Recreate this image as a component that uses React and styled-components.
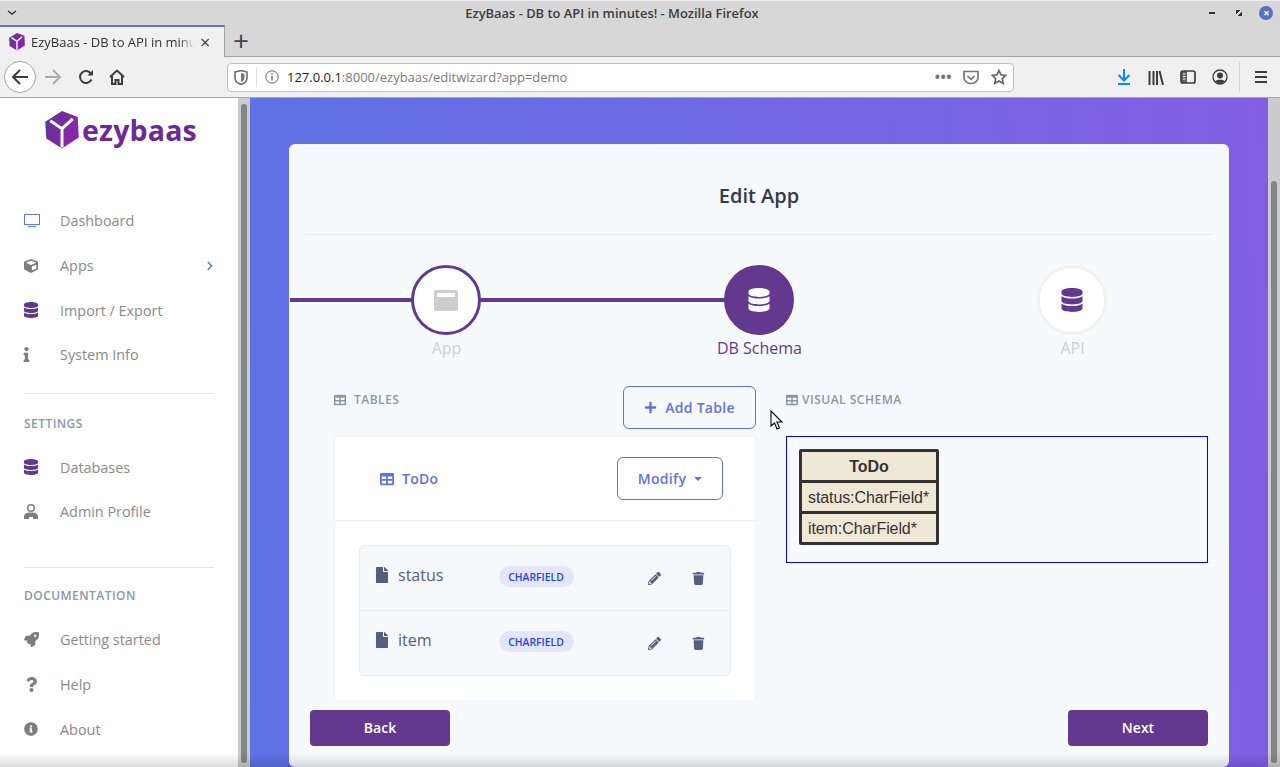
import React from "react";
import styled, { createGlobalStyle } from "styled-components";
import {
  FaCube,
  FaDatabase,
  FaInfo,
  FaChevronRight,
  FaRocket,
  FaQuestion,
  FaInfoCircle,
  FaFile,
  FaPencilAlt,
  FaTrash,
  FaTable,
  FaPlus,
} from "react-icons/fa";

const PURPLE = "#63388f";
const BLUE = "#5e72e4";

const GlobalStyle = createGlobalStyle`
  html, body {
    margin: 0;
    height: 767px;
    overflow: hidden;
    background: #fff;
    font-family: "Open Sans", "Liberation Sans", sans-serif;
  }
  * { box-sizing: border-box; }
`;

const CubeLogo = ({ size }) => (
  <svg width={size} height={size * 1.1} viewBox="0 0 34 38">
    <defs>
      <linearGradient id={`cube${size}`} x1="0" y1="0" x2="1" y2="0.4">
        <stop offset="0" stopColor="#5c3792" />
        <stop offset="1" stopColor="#8c24aa" />
      </linearGradient>
    </defs>
    <path d="M0 11 17 0l16 6 1 21-17 11L1 28z" fill={`url(#cube${size})`} />
    <path d="M5 10l12 8L28 8M17 18v19" fill="none" stroke="#fff" strokeWidth="3" />
  </svg>
);

const Chevron = () => (
  <svg width="10" height="6" viewBox="0 0 10 6">
    <path d="M1 1l4 3 4-3" fill="none" stroke="#333" strokeWidth="1.4" />
  </svg>
);

const BackIcon = () => (
  <svg width="18" height="18" viewBox="0 0 18 18" fill="none" stroke="#3d3d3d" strokeWidth="2">
    <path d="M17 9H2M9 2 2 9l7 7" />
  </svg>
);

const ForwardIcon = () => (
  <svg width="18" height="18" viewBox="0 0 18 18" fill="none" stroke="#aaa" strokeWidth="2">
    <path d="M1 9h15M9 2l7 7-7 7" />
  </svg>
);

const ReloadIcon = () => (
  <svg width="16" height="16" viewBox="0 0 16 16" fill="none" stroke="#3d3d3d" strokeWidth="2">
    <path d="M13.5 10.5A6 6 0 1 1 13 4.6" />
    <path d="M15 1v5.5H9.5z" fill="#3d3d3d" stroke="none" />
  </svg>
);

const HomeIcon = () => (
  <svg width="16" height="16" viewBox="0 0 16 16" fill="none" stroke="#3d3d3d" strokeWidth="2">
    <path d="M1 8l7-6.5L15 8M3 7v8h3.5v-4h3v4H13V7" />
  </svg>
);

const ShieldIcon = () => (
  <svg width="14" height="15" viewBox="0 0 14 15">
    <path d="M1 2l6-1.500 6 1.500v6c0 3-3 5.500-6 6.500-3-1-6-3.500-6-6.500z" fill="none" stroke="#666" strokeWidth="1.500" />
    <path d="M7 3l3.500 1v4c0 2-2 3.500-3.500 4z" fill="#777" />
  </svg>
);

const InfoIcon = () => (
  <svg width="14" height="14" viewBox="0 0 14 14" fill="none" stroke="#666">
    <circle cx="7" cy="7" r="6.200" />
    <path d="M7 6v4.500M7 3.500v1.300" strokeWidth="1.400" />
  </svg>
);

const PocketIcon = () => (
  <svg width="16" height="15" viewBox="0 0 16 15" fill="none" stroke="#777" strokeWidth="1.700">
    <path d="M1 1.500h14v6c0 3.500-3.500 6-7 6s-7-2.500-7-6z" />
    <path d="M4.500 6 8 9.300 11.500 6" />
  </svg>
);

const StarIcon = () => (
  <svg width="16" height="16" viewBox="0 0 16 16" fill="none" stroke="#666" strokeWidth="1.700">
    <path d="M8 1.500l2 4.300 4.700.6-3.400 3.200.9 4.700L8 12l-4.200 2.300.9-4.700L1.300 6.400 6 5.800z" />
  </svg>
);

const DownloadIcon = () => (
  <svg width="14" height="16" viewBox="0 0 14 16" fill="none" stroke="#0a84ff" strokeWidth="2">
    <path d="M7 0v11M1.500 6 7 11.500 12.500 6M1 15h12" />
  </svg>
);

const LibraryIcon = () => (
  <svg width="16" height="15" viewBox="0 0 16 15" fill="none" stroke="#3d3d3d" strokeWidth="2">
    <path d="M1.500 1v14M5.500 1v14M9 1v14M11.500 1l3.500 14" />
  </svg>
);

const SidebarIcon = () => (
  <svg width="16" height="14" viewBox="0 0 16 14">
    <rect x="1" y="1" width="14" height="12" rx="2" fill="none" stroke="#3d3d3d" strokeWidth="1.700" />
    <rect x="1" y="1" width="6" height="12" fill="#3d3d3d" opacity=".8" />
    <path d="M3 4h2.500M3 6.500h2.500M3 9h2.500" stroke="#eee" />
  </svg>
);

const AccountIcon = () => (
  <svg width="16" height="16" viewBox="0 0 16 16">
    <circle cx="8" cy="8" r="7" fill="none" stroke="#3d3d3d" strokeWidth="1.300" />
    <circle cx="8" cy="6.500" r="3" fill="#3d3d3d" />
    <path d="M3 12.500c1-2.500 9-2.500 10 0L8 15z" fill="#3d3d3d" />
  </svg>
);

const MenuIcon = () => (
  <svg width="14" height="12" viewBox="0 0 14 12" stroke="#3d3d3d" strokeWidth="2">
    <path d="M1 1h12M1 6h12M1 11h12" />
  </svg>
);

const TvIcon = () => (
  <svg width="16" height="14" viewBox="0 0 16 14" fill="none" stroke="#5f74f0" strokeWidth="1">
    <rect x="0.500" y="0.500" width="15" height="10" />
    <path d="M4 12.500h8" />
  </svg>
);

const ProfileIcon = () => (
  <svg width="14" height="15" viewBox="0 0 14 15" fill="#7d7d7d" fillRule="evenodd">
    <path d="M7 0a4 4 0 1 1 0 8 4 4 0 0 1 0-8zm0 1.500a2.500 2.500 0 1 0 0 5 2.500 2.500 0 0 0 0-5z" />
    <path d="M0 15v-2.500C0 10 2.500 8.500 7 8.500s7 1.500 7 4V15H9v-2H5v2z" />
  </svg>
);

const AppWindowIcon = () => (
  <svg width="24" height="21" viewBox="0 0 24 21">
    <rect width="24" height="21" rx="2" fill="#cdcdcd" />
    <rect x="3" y="3" width="18" height="4" fill="#fff" />
  </svg>
);

const CursorIcon = () => (
  <svg width="13" height="20" viewBox="0 0 13 20">
    <path d="M1 1v15l3.500-3 2.500 6 2.500-1-2.500-6H12z" fill="#fff" stroke="#000" strokeWidth="1.100" />
  </svg>
);

const Window = styled.div`
  position: relative;
  height: 767px;
  width: 1280px;
  display: flex;
  flex-direction: column;
  overflow: hidden;
`;

const TitleBar = styled.div`
  height: 25px;
  display: flex;
  align-items: center;
  background: #d7d7d7;
  border-top: 1px solid #efefef;
`;

const MenuToggle = styled.div`
  width: 26px;
  display: flex;
  justify-content: center;
  padding-right: 2px;
`;

const WindowTitle = styled.div`
  flex: 1;
  text-align: center;
  font-size: 12.900px;
  font-weight: 600;
  color: #3c3c3c;
`;

const WindowControls = styled.div`
  width: 82px;
  display: flex;
`;

const WindowControl = styled.div`
  width: 28px;
  height: 14px;
  display: flex;
  align-items: center;
  justify-content: center;
`;

const Minimize = styled.span`
  width: 6px;
  height: 2px;
  background: #333;
`;

const Restore = styled.span`
  width: 6px;
  height: 6px;
  background: linear-gradient(135deg, #333 0 35%, transparent 35% 65%, #333 65%);
`;

const CloseDot = styled.span`
  width: 14px;
  height: 14px;
  border-radius: 50%;
  background: #5c6fc6;
  color: #fff;
  font-size: 11px;
  font-weight: 700;
  line-height: 14px;
  text-align: center;
`;

const TabStrip = styled.div`
  height: 32px;
  display: flex;
  background: #d7d7d7;
  border-bottom: 1px solid #a3a3a3;
`;

const Tab = styled.div`
  width: 225px;
  height: 32px;
  display: flex;
  align-items: center;
  padding: 0 0 0 9px;
  background: #f0f0f0;
  border-top: 2px solid #5a72c8;
  border-right: 1px solid #a3a3a3;
`;

const TabTitle = styled.span`
  width: 164px;
  margin-left: 6px;
  font-size: 13px;
  color: #333;
  white-space: nowrap;
  mask-image: linear-gradient(90deg, #000 90%, transparent);
`;

const TabClose = styled.span`
  margin-left: 5px;
  font-size: 18px;
  line-height: 18px;
  color: #444;
`;

const NewTab = styled.span`
  width: 32px;
  text-align: center;
  font-size: 28px;
  line-height: 30px;
  font-weight: 400;
  color: #444;
`;

const Toolbar = styled.div`
  height: 41px;
  display: flex;
  align-items: center;
  padding-left: 4px;
  background: #f0f0f0;
  border-bottom: 1px solid #a9a9a9;
`;

const ToolButton = styled.div`
  width: ${(p) => p.$w || 32}px;
  height: 32px;
  display: flex;
  align-items: center;
  justify-content: center;
`;

const BackButton = styled(ToolButton)`
  border: 1px solid #a8a8a8;
  border-radius: 50%;
  background: #fff;
`;

const UrlBar = styled.div`
  width: 787px;
  height: 29px;
  margin-left: 95px;
  margin-right: 94px;
  display: flex;
  align-items: center;
  background: #fff;
  border: 1px solid #c2c2c2;
  border-radius: 4px;
  padding-left: 6px;
`;

const UrlDivider = styled.span`
  width: 1px;
  height: 20px;
  margin: 0 8px 0 8px;
  background: #ddd;
`;

const UrlText = styled.span`
  flex: 1;
  margin-left: 8px;
  font-size: 13px;
  color: #7a7a7a;
  b {
    font-weight: 400;
    color: #222;
  }
`;

const UrlDots = styled.span`
  font-size: 14px;
  font-weight: 700;
  color: #777;
  letter-spacing: 0.5px;
  margin-right: 5px;
  line-height: 14px;
`;

const UrlAction = styled.span`
  width: 28px;
  display: flex;
  justify-content: center;
`;

const ToolSeparator = styled.span`
  width: 1px;
  height: 30px;
  margin: 0 5px 0 3px;
  background: #d4d4d4;
`;

const Page = styled.div`
  position: relative;
  flex: 1;
  min-height: 0;
  display: flex;
`;

const Sidebar = styled.aside`
  width: 238px;
  padding: 12px 24px 0;
  background: #fff;
`;

const Logo = styled.div`
  height: 40px;
  display: flex;
  align-items: center;
  gap: 3px;
  margin: 0 0 48.700px 21px;
  font-size: 28.500px;
  font-weight: 700;
  color: #6b2a97;
  letter-spacing: 0.2px;
`;

const NavItem = styled.div`
  height: 44.600px;
  display: flex;
  align-items: center;
  font-size: 14.400px;
  color: #8a8a8a;
`;

const NavIcon = styled.span`
  width: 36px;
  display: flex;
  align-items: center;
  font-size: ${(p) => p.$size || 14}px;
  color: ${(p) => p.$color || "#7d7d7d"};
  svg {
    margin-left: ${(p) => p.$x || 0}px;
  }
`;

const NavArrow = styled.span`
  margin-left: auto;
  margin-right: -1px;
  display: flex;
  font-size: 10px;
  color: #6c87a8;
`;

const NavDivider = styled.hr`
  margin: ${(p) => p.$m || "15.700px 0 0"};
  border: 0;
  border-top: 1px solid #e6e6e6;
`;

const NavHeading = styled.h6`
  margin: ${(p) => p.$m || "22px 0 13px"};
  font-size: 12px;
  line-height: 16px;
  font-weight: 600;
  letter-spacing: 0.45px;
  color: #8898aa;
`;

const ScrollTrack = styled.div`
  width: ${(p) => p.$w}px;
  padding: ${(p) => p.$top}px 3px 4px;
  background: #cbcbcb;
`;

const ScrollThumb = styled.div`
  height: 100%;
  border-radius: 3px;
  background: #828685;
`;

const Main = styled.main`
  flex: 1;
  padding: 46px 39px 0;
  background: linear-gradient(87deg, ${BLUE}, #825ee4);
`;

const Card = styled.section`
  height: 623px;
  display: flex;
  flex-direction: column;
  background: #f7fafc;
  border-radius: 6px;
  overflow: hidden;
`;

const CardHeader = styled.header`
  height: 91px;
  margin: 0 16px 0 16px;
  display: flex;
  align-items: center;
  justify-content: center;
  border-bottom: 1px solid #e9ecef;
  font-size: 20px;
  font-weight: 600;
  color: #32394d;
  padding-top: 12px;
`;

const Stepper = styled.div`
  position: relative;
  display: grid;
  grid-template-columns: repeat(3, 313px);
  margin-top: 30px;
  height: 121px;
  &::before {
    content: "";
    position: absolute;
    left: 1px;
    top: 33px;
    width: 469px;
    height: 4px;
    background: ${PURPLE};
  }
`;

const Step = styled.div`
  position: relative;
  display: flex;
  flex-direction: column;
  align-items: center;
  font-size: 16px;
  color: ${(p) => (p.$active ? PURPLE : "#cfcfcf")};
`;

const StepCircle = styled.div`
  width: 70px;
  height: 70px;
  margin-bottom: 2px;
  display: flex;
  align-items: center;
  justify-content: center;
  border-radius: 50%;
  font-size: 24px;
  background: ${(p) => (p.$active ? PURPLE : "#fff")};
  color: ${(p) => (p.$active ? "#fff" : PURPLE)};
  border: 3px solid ${(p) => (p.$done || p.$active ? PURPLE : "#f3f1ed")};
`;

const StepLabel = styled.span`
  margin-left: 2px;
`;

const Columns = styled.div`
  flex: 1;
  min-height: 0;
  display: grid;
  grid-template-columns: 422px 422px;
  gap: 30px;
  padding: 0 0 0 45px;
  overflow: hidden;
`;

const ColumnHead = styled.div`
  height: 50px;
  display: flex;
  align-items: flex-start;
  justify-content: space-between;
`;

const Label = styled.div`
  display: flex;
  align-items: center;
  margin-top: 6px;
  line-height: 16px;
  font-size: 12px;
  font-weight: 600;
  letter-spacing: 0.5px;
  color: #8898aa;
  svg {
    margin-right: ${(p) => p.$gap}px;
  }
`;

const OutlineButton = styled.button`
  height: 43px;
  width: ${(p) => p.$w}px;
  padding: 0;
  display: flex;
  align-items: center;
  justify-content: center;
  gap: 8px;
  background: transparent;
  border: 1px solid ${BLUE};
  border-radius: 6px;
  color: ${BLUE};
  font-family: inherit;
  font-size: 14px;
  font-weight: 600;
  letter-spacing: 0.3px;
`;

const Caret = styled.span`
  width: 0;
  height: 0;
  border: 4px solid transparent;
  border-top-color: ${BLUE};
  border-bottom: 0;
`;

const TablePanel = styled.div`
  height: 264px;
  background: #fff;
  border: 1px solid #f1f3f7;
  border-bottom: 0;
`;

const PanelHeader = styled.div`
  height: 84px;
  display: flex;
  align-items: center;
  justify-content: space-between;
  padding: 0 32px 0 45px;
  border-bottom: 1px solid #eff1f5;
`;

const TableName = styled.div`
  display: flex;
  align-items: center;
  gap: 8px;
  font-size: 14px;
  font-weight: 600;
  letter-spacing: 0.3px;
  color: ${BLUE};
`;

const FieldList = styled.div`
  margin: 24px 24px 0 24px;
  background: #f6f9fc;
  border: 1px solid #e9ecef;
  border-radius: 6px;
`;

const FieldRow = styled.div`
  height: 64px;
  display: flex;
  padding: 20px 0 0 16px;
  & + & {
    height: 65px;
    border-top: 1px solid #e9ecef;
  }
`;

const FieldName = styled.div`
  width: 123px;
  margin-top: -1px;
  display: flex;
  gap: 10px;
  font-size: 16px;
  line-height: 20px;
  color: #525f7f;
  svg {
    margin: 2px -2px 0;
  }
`;

const Badge = styled.span`
  width: 75px;
  height: 21px;
  padding-right: 1px;
  border-radius: 11px;
  background: #e2e6f8;
  color: #2643e9;
  font-size: 10.400px;
  font-weight: 600;
  line-height: 22px;
  text-align: center;
`;

const RowAction = styled.span`
  width: 14px;
  margin-left: ${(p) => p.$ml}px;
  display: flex;
  justify-content: center;
  padding-top: 6px;
  font-size: 13px;
  color: #525f7f;
`;

const SchemaBox = styled.div`
  height: 127px;
  padding: 12px;
  border: 1px solid #0000ff;
`;

const UmlTable = styled.div`
  width: 140px;
  border: 3px solid #333;
  border-radius: 2px;
  background: #efe8d7;
  font-family: "Liberation Sans", Arial, sans-serif;
  font-size: 16px;
  color: #333;
`;

const UmlRow = styled.div`
  height: ${(p) => (p.$head ? 28 : 31)}px;
  line-height: 30px;
  padding-left: ${(p) => (p.$head ? 0 : 6)}px;
  white-space: nowrap;
  letter-spacing: -0.1px;
  text-align: ${(p) => (p.$head ? "center" : "left")};
  font-weight: ${(p) => (p.$head ? 700 : 400)};
  & + & {
    border-top: 3px solid #333;
  }
`;

const CardFooter = styled.footer`
  height: 67px;
  display: flex;
  justify-content: space-between;
  padding: 10px 21px 0;
`;

const FooterButton = styled.button`
  width: 140px;
  height: 36px;
  padding: 0 0 2px;
  border: 0;
  border-radius: 4px;
  background: ${PURPLE};
  color: #fff;
  font-family: inherit;
  font-size: 14px;
  font-weight: 600;
`;

const BottomFade = styled.div`
  position: absolute;
  left: 0;
  right: 0;
  bottom: 0;
  height: 14px;
  background: linear-gradient(180deg, rgba(0, 0, 0, 0), rgba(0, 0, 0, 0.14));
  pointer-events: none;
`;

const Pointer = styled.div`
  position: absolute;
  left: 770px;
  top: 410px;
  display: flex;
`;

const mainNav = [
  { label: "Dashboard", icon: <TvIcon /> },
  { label: "Apps", icon: <FaCube />, arrow: true },
  { label: "Import / Export", icon: <FaDatabase />, color: PURPLE, size: 16, x: -1 },
  { label: "System Info", icon: <FaInfo />, size: 15, x: -5 },
];

const settingsNav = [
  { label: "Databases", icon: <FaDatabase />, color: PURPLE, size: 16, x: -1 },
  { label: "Admin Profile", icon: <ProfileIcon /> },
];

const docsNav = [
  { label: "Getting started", icon: <FaRocket />, size: 15 },
  { label: "Help", icon: <FaQuestion />, size: 15 },
  { label: "About", icon: <FaInfoCircle /> },
];

const fields = ["status", "item"];

const NavList = ({ items }) =>
  items.map((item) => (
    <NavItem key={item.label}>
      <NavIcon $color={item.color} $size={item.size} $x={item.x}>
        {item.icon}
      </NavIcon>
      {item.label}
      {item.arrow && (
        <NavArrow>
          <FaChevronRight />
        </NavArrow>
      )}
    </NavItem>
  ));

const App = () => {
  return (
    <Window>
      <GlobalStyle />
      <TitleBar>
        <MenuToggle>
          <Chevron />
        </MenuToggle>
        <WindowTitle>EzyBaas - DB to API in minutes! - Mozilla Firefox</WindowTitle>
        <WindowControls>
          <WindowControl>
            <Minimize />
          </WindowControl>
          <WindowControl>
            <Restore />
          </WindowControl>
          <WindowControl>
            <CloseDot>×</CloseDot>
          </WindowControl>
        </WindowControls>
      </TitleBar>
      <TabStrip>
        <Tab>
          <CubeLogo size={16} />
          <TabTitle>EzyBaas - DB to API in minu</TabTitle>
          <TabClose>×</TabClose>
        </Tab>
        <NewTab>+</NewTab>
      </TabStrip>
      <Toolbar>
        <BackButton>
          <BackIcon />
        </BackButton>
        <ToolButton $w={34}>
          <ForwardIcon />
        </ToolButton>
        <ToolButton>
          <ReloadIcon />
        </ToolButton>
        <ToolButton $w={30}>
          <HomeIcon />
        </ToolButton>
        <UrlBar>
          <ShieldIcon />
          <UrlDivider />
          <InfoIcon />
          <UrlText>
            <b>127.0.0.1</b>:8000/ezybaas/editwizard?app=demo
          </UrlText>
          <UrlDots>•••</UrlDots>
          <UrlAction>
            <PocketIcon />
          </UrlAction>
          <UrlAction>
            <StarIcon />
          </UrlAction>
        </UrlBar>
        <ToolButton>
          <DownloadIcon />
        </ToolButton>
        <ToolButton>
          <LibraryIcon />
        </ToolButton>
        <ToolButton>
          <SidebarIcon />
        </ToolButton>
        <ToolButton>
          <AccountIcon />
        </ToolButton>
        <ToolSeparator />
        <ToolButton>
          <MenuIcon />
        </ToolButton>
      </Toolbar>
      <Page>
        <Sidebar>
          <Logo>
            <CubeLogo size={34} />
            ezybaas
          </Logo>
          <NavList items={mainNav} />
          <NavDivider />
          <NavHeading>SETTINGS</NavHeading>
          <NavList items={settingsNav} />
          <NavDivider $m="32.800px 0 0" />
          <NavHeading $m="20px 0 13.800px">DOCUMENTATION</NavHeading>
          <NavList items={docsNav} />
        </Sidebar>
        <ScrollTrack $w={12} $top={6}>
          <ScrollThumb />
        </ScrollTrack>
        <Main>
          <Card>
            <CardHeader>Edit App</CardHeader>
            <Stepper>
              <Step>
                <StepCircle $done>
                  <AppWindowIcon />
                </StepCircle>
                <StepLabel>App</StepLabel>
              </Step>
              <Step $active>
                <StepCircle $active>
                  <FaDatabase />
                </StepCircle>
                <StepLabel>DB Schema</StepLabel>
              </Step>
              <Step>
                <StepCircle>
                  <FaDatabase />
                </StepCircle>
                <StepLabel>API</StepLabel>
              </Step>
            </Stepper>
            <Columns>
              <div>
                <ColumnHead>
                  <Label $gap={8}>
                    <FaTable size={12} />
                    TABLES
                  </Label>
                  <OutlineButton $w={133}>
                    <FaPlus size={13} />
                    Add Table
                  </OutlineButton>
                </ColumnHead>
                <TablePanel>
                  <PanelHeader>
                    <TableName>
                      <FaTable size={14} />
                      ToDo
                    </TableName>
                    <OutlineButton $w={106}>
                      Modify
                      <Caret />
                    </OutlineButton>
                  </PanelHeader>
                  <FieldList>
                    {fields.map((name) => (
                      <FieldRow key={name}>
                        <FieldName>
                          <FaFile size={16} />
                          {name}
                        </FieldName>
                        <Badge>CHARFIELD</Badge>
                        <RowAction $ml={73}>
                          <FaPencilAlt />
                        </RowAction>
                        <RowAction $ml={30}>
                          <FaTrash size={13} />
                        </RowAction>
                      </FieldRow>
                    ))}
                  </FieldList>
                </TablePanel>
              </div>
              <div>
                <ColumnHead>
                  <Label $gap={4}>
                    <FaTable size={12} />
                    VISUAL SCHEMA
                  </Label>
                </ColumnHead>
                <SchemaBox>
                  <UmlTable>
                    <UmlRow $head>ToDo</UmlRow>
                    <UmlRow>status:CharField*</UmlRow>
                    <UmlRow>item:CharField*</UmlRow>
                  </UmlTable>
                </SchemaBox>
              </div>
            </Columns>
            <CardFooter>
              <FooterButton>Back</FooterButton>
              <FooterButton>Next</FooterButton>
            </CardFooter>
          </Card>
        </Main>
        <ScrollTrack $w={12} $top={83}>
          <ScrollThumb />
        </ScrollTrack>
        <BottomFade />
      </Page>
      <Pointer>
        <CursorIcon />
      </Pointer>
    </Window>
  );
};

export default App;
